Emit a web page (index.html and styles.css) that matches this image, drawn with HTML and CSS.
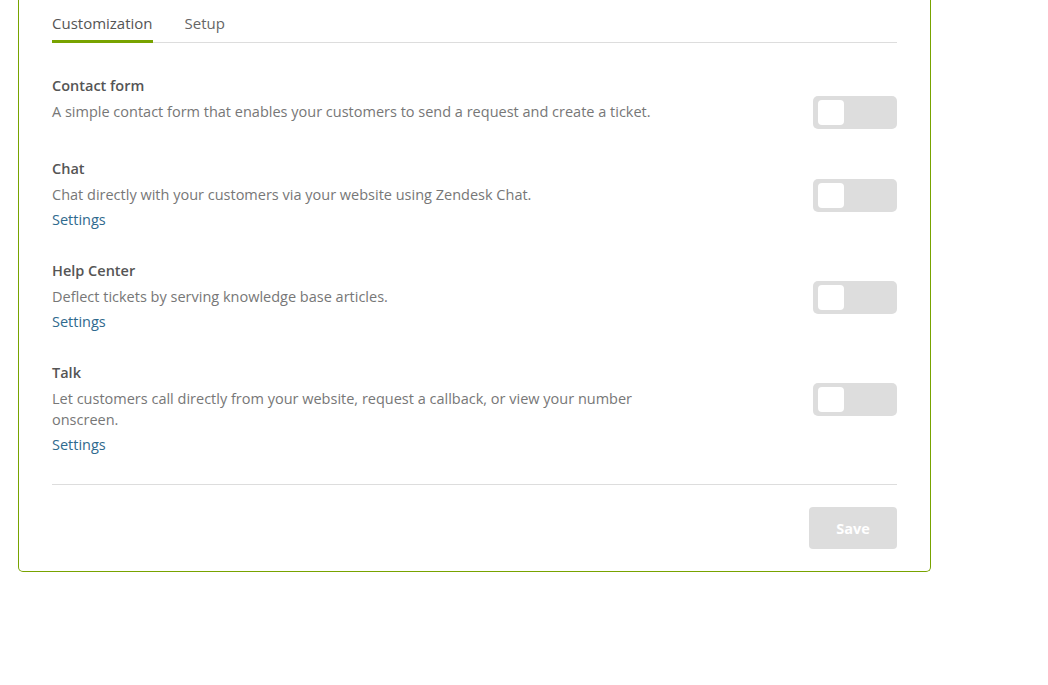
FILE: index.html
```html
<!DOCTYPE html>
<html>
<head>
<meta charset="utf-8">
<link rel="stylesheet" href="styles.css">
</head>
<body>
<div class="card">
  <div class="tabs">
    <div class="tab tab-active">Customization</div>
    <div class="tab">Setup</div>
  </div>
  <div class="rows">
    <div class="row">
      <div class="info">
        <div class="title">Contact form</div>
        <div class="desc">A simple contact form that enables your customers to send a request and create a ticket.</div>
      </div>
      <div class="toggle"><span class="knob"></span></div>
    </div>
    <div class="row">
      <div class="info">
        <div class="title">Chat</div>
        <div class="desc">Chat directly with your customers via your website using Zendesk Chat.</div>
        <a class="link" href="#">Settings</a>
      </div>
      <div class="toggle"><span class="knob"></span></div>
    </div>
    <div class="row">
      <div class="info">
        <div class="title">Help Center</div>
        <div class="desc">Deflect tickets by serving knowledge base articles.</div>
        <a class="link" href="#">Settings</a>
      </div>
      <div class="toggle"><span class="knob"></span></div>
    </div>
    <div class="row row-last">
      <div class="info">
        <div class="title">Talk</div>
        <div class="desc">Let customers call directly from your website, request a callback, or view your number onscreen.</div>
        <a class="link" href="#">Settings</a>
      </div>
      <div class="toggle"><span class="knob"></span></div>
    </div>
  </div>
  <div class="footer">
    <button class="save" disabled>Save</button>
  </div>
</div>
</body>
</html>
```
FILE: styles.css
```css
* { box-sizing: border-box; }
html, body { margin: 0; padding: 0; background: #fff; }
body {
  font-family: "Open Sans", "Noto Sans", "Liberation Sans", sans-serif;
  font-size: 14.5px;
  color: #777;
}
.card {
  margin-left: 18px;
  width: 913px;
  border: 1px solid #78a300;
  border-top: 0;
  border-radius: 0 0 5px 5px;
  padding: 0 33px 22px;
}
.tabs {
  display: flex;
  gap: 32px;
  border-bottom: 1px solid #ddd;
}
.tab {
  font-size: 15px;
  padding-top: 13px;
  padding-bottom: 7px;
  line-height: 20px;
  color: #666;
  border-bottom: 3px solid transparent;
  margin-bottom: -1px;
}
.tab-active {
  color: #555;
  border-bottom-color: #78a300;
}
.rows {
  padding-top: 33px;
  padding-bottom: 29px;
  border-bottom: 1px solid #ddd;
}
.row {
  display: flex;
  justify-content: space-between;
  align-items: flex-start;
  margin-bottom: 31px;
}
.row-last { margin-bottom: 0; }
.info {
  display: flex;
  flex-direction: column;
  align-items: flex-start;
  max-width: 630px;
}
.title {
  font-weight: 600;
  color: #555;
  line-height: 20px;
  margin-bottom: 5px;
}
.desc {
  line-height: 21px;
}
.link {
  color: #2f6a8e;
  text-decoration: none;
  line-height: 21px;
  margin-top: 4px;
}
.toggle {
  width: 84px;
  height: 33px;
  margin-top: 20px;
  margin-bottom: -1px;
  border-radius: 5px;
  background: #ddd;
  padding: 4px 5px;
  display: flex;
}
.knob {
  width: 26px;
  height: 25px;
  border-radius: 4px;
  background: #fff;
}
.footer {
  display: flex;
  justify-content: flex-end;
  padding-top: 22px;
}
.save {
  width: 88px;
  height: 42px;
  border: 0;
  border-radius: 4px;
  background: #ddd;
  color: #fff;
  font-family: inherit;
  font-size: 14.5px;
  font-weight: 700;
}
```
